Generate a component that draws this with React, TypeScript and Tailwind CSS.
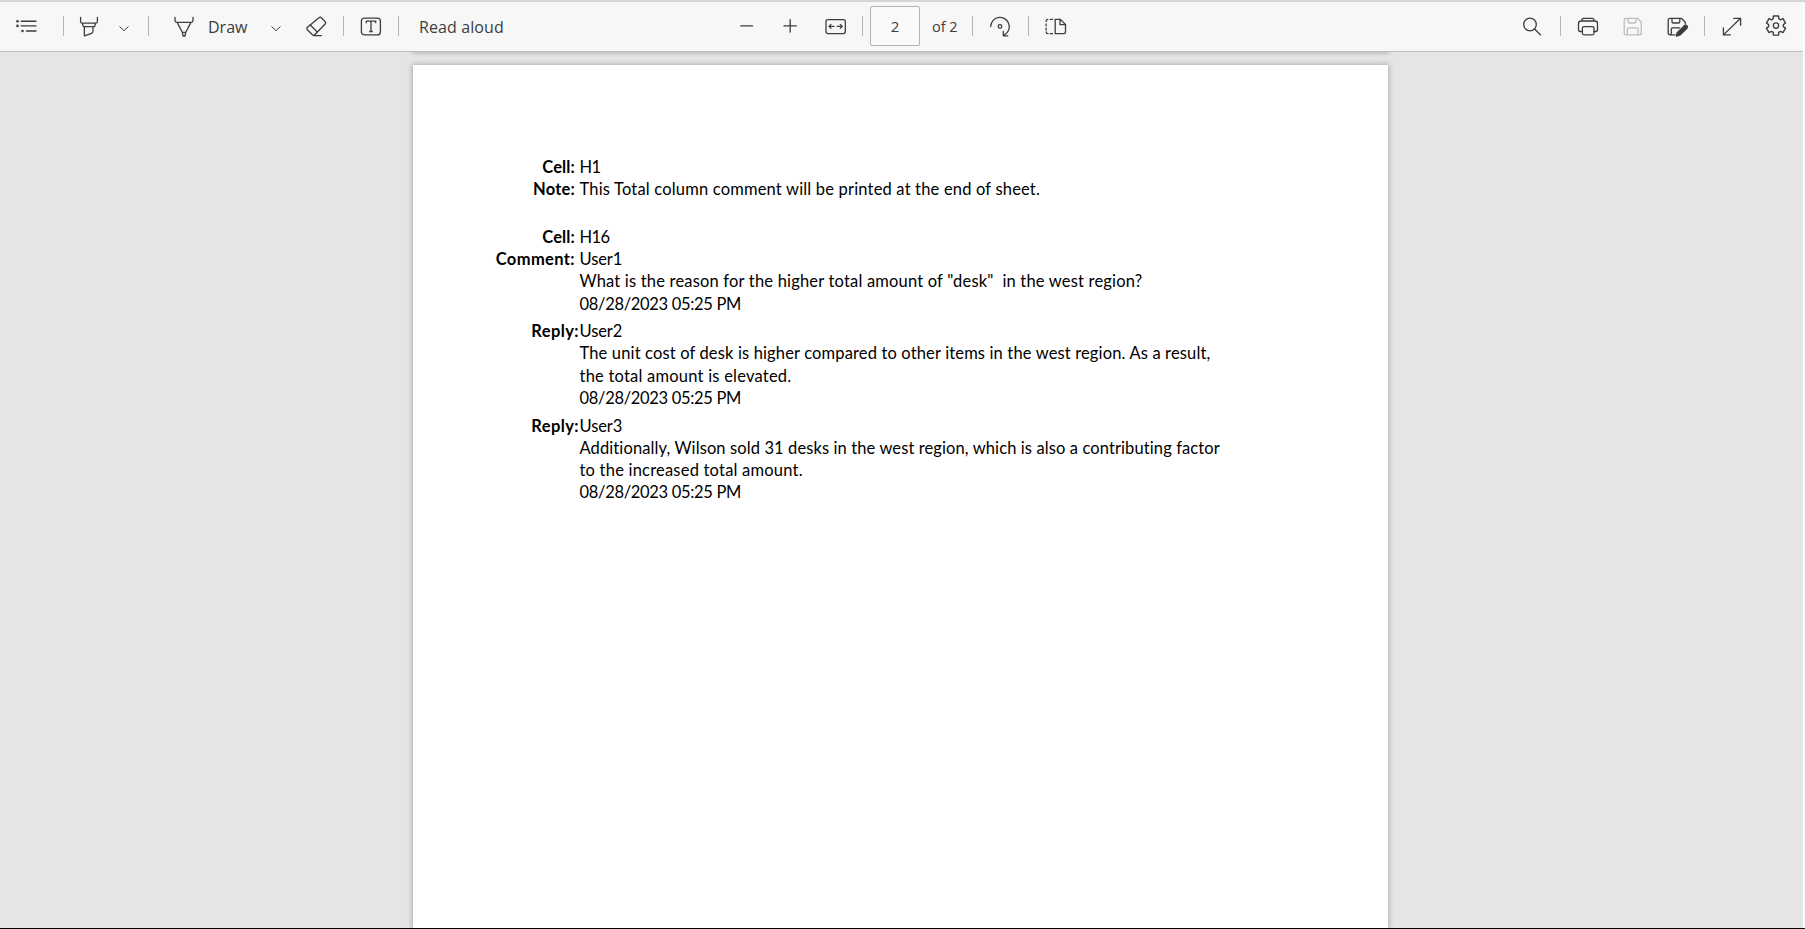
import React from 'react';

type IconProps = { className: string; width: number; children: React.ReactNode };

function Icon({ className, width, children }: IconProps) {
  return (
    <svg
      className={`shrink-0 ${className}`}
      width={width}
      height={24}
      viewBox={`0 0 ${width} 24`}
      fill="none"
      stroke="currentColor"
      strokeWidth={1.3}
      strokeLinecap="round"
      strokeLinejoin="round"
    >
      {children}
    </svg>
  );
}

function Divider({ className }: { className: string }) {
  return <div className={`h-5 w-px shrink-0 bg-[#b5b5b5] ${className}`} />;
}

function Chevron({ className }: { className: string }) {
  return (
    <Icon className={className} width={10}>
      <path d="M0.800 12.800l4.200 3.900 4.200-3.900" strokeWidth={1} />
    </Icon>
  );
}

const gearPath = (() => {
  const points: string[] = [];
  for (let tooth = 0; tooth < 6; tooth++) {
    const mid = tooth * 60 - 90;
    const corners: [number, number][] = [
      [-22, 7.4],
      [-15, 9.9],
      [15, 9.9],
      [22, 7.4],
    ];
    corners.forEach(([offset, radius]) => {
      const a = ((mid + offset) * Math.PI) / 180;
      points.push(`${(11 + radius * Math.cos(a)).toFixed(2)} ${(11.6 + radius * Math.sin(a)).toFixed(2)}`);
    });
  }
  return `M${points.join('L')}Z`;
})();

function Toolbar() {
  return (
    <header className="relative z-10 flex h-[52px] w-[1803px] items-center border-b border-[#bdbdbd] bg-[#f7f7f7] pt-px font-['Open_Sans','Noto_Sans',sans-serif] text-base text-[#3d3d3d]">
      <div className="flex items-center pl-4">
        <Icon className="" width={22}>
          <path d="M5.2 7.2H20M5.2 11.9H20M10.5 17H20" strokeWidth={1.4} />
          <g fill="currentColor" stroke="none">
            <circle cx="1.5" cy="7.2" r="1.3" />
            <circle cx="1.5" cy="11.9" r="1.3" />
            <circle cx="6.5" cy="17" r="1.3" />
          </g>
        </Icon>
        <Divider className="ml-[25px]" />
        <Icon className="ml-[15px]" width={20}>
          <path d="M1.6 3.3v4.4q0 1.5 1.5 1.5h13.8q1.5 0 1.5-1.5V3.3M3.3 9.3l1.1 3.3h11.2l1.1-3.3M5.4 12.8v9.1l6.6-2.3q2-.7 2-2.5v-4.3" />
        </Icon>
        <Chevron className="ml-5" />
        <Divider className="ml-[19px]" />
        <Icon className="ml-[25px]" width={20}>
          <path d="M1 3.3v3.3q0 1.7 1.7 1.7h14.6q1.7 0 1.7-1.7V3.3M3.2 8.4l5.2 10.1L9 22h2l.7-3.5 5.2-10.1M8.4 18.4h3.3" />
        </Icon>
        <span className="ml-[13px] w-[41px] pl-px pt-0.5">Draw</span>
        <Chevron className="ml-[23px]" />
        <Icon className="ml-6" width={22}>
          <path d="M14 3.8q1.2-1.1 2.4 0l3.7 3.8q1.1 1.2 0 2.4L9.8 20.7q-1.2 1.1-2.4 0l-5-5q-1.1-1.2 0-2.4zM5 10.8l7.3 7.2M8.5 21.6h7.8" />
        </Icon>
        <Divider className="ml-4" />
        <Icon className="ml-4" width={22}>
          <rect x="1.4" y="4.1" width="19" height="16.8" rx="3" />
          <path d="M6.3 9.2V7.2h9.4v2M11 7.2v10.2M9.2 17.5h3.6" strokeLinecap="butt" />
        </Icon>
        <Divider className="ml-4" />
        <span className="ml-[19px] w-[87px] whitespace-nowrap pl-px pt-0.5 tracking-[0.100px]">Read aloud</span>
      </div>

      <div className="ml-[234px] flex items-center">
        <Icon className="" width={16}>
          <path d="M1.7 11.9h11.8" />
        </Icon>
        <Icon className="ml-[27px]" width={16}>
          <path d="M2 11.9h12.4M8.2 5.7v12.4" />
        </Icon>
        <Icon className="ml-[27px]" width={22}>
          <rect x="1" y="5.6" width="19.3" height="14" rx="2" />
          <path d="M4 12.4h5M6 10.4l-2 2 2 2M17.3 12.4h-5M15.3 10.4l2 2-2 2" />
        </Icon>
        <Divider className="ml-[15px]" />
        <div className="ml-[7px] flex h-10 w-[50px] items-center justify-center rounded-[2px] border border-[#b3b3b3] bg-[#fafafa] pt-px text-[15px]">
          2
        </div>
        <span className="ml-3 w-7 whitespace-nowrap pt-0.5 text-[14.500px]">of 2</span>
        <Divider className="ml-3" />
        <Icon className="ml-4" width={22}>
          <path d="M1.7 12.5A9.3 9.3 0 1 1 14.3 21.4M14.3 17.3v4.5h4.5" />
          <circle cx="11" cy="12.4" r="1.8" />
        </Icon>
        <Divider className="ml-[17px]" />
        <Icon className="ml-4" width={22}>
          <path d="M10.2 5.4h5.2l5.1 5.1v7.3q0 1.9-1.9 1.9h-8.4zM15 5.6v5.1h5.2" />
          <path d="M7.5 5.4H5.3M2.8 5.4q-1.7.2-1.7 2M1.1 10v1.8M1.1 14.2V16M1.1 18q.2 1.7 1.9 1.7M5.3 19.7h2.2" />
        </Icon>
      </div>

      <div className="ml-auto flex items-center pr-4">
        <Icon className="" width={20}>
          <circle cx="8" cy="10.5" r="6.3" />
          <path d="M12.6 15l5.8 5.8" />
        </Icon>
        <Divider className="ml-[18px]" />
        <Icon className="ml-4" width={22}>
          <path d="M5 7v-.9q0-1.8 1.8-1.8h8.4Q17 4.3 17 6.1V7M5 17.5H3.4q-1.9 0-1.9-1.9V9.6Q1.5 7 4.1 7h13.8q2.6 0 2.6 2.6v6q0 1.9-1.9 1.9H17" />
          <rect x="5.4" y="12.6" width="11.6" height="8.2" rx="1.5" />
        </Icon>
        <Icon className="ml-6 text-[#bdbdbd]" width={20}>
          <path d="M1.2 6.3q0-2 2-2h11.2l3.9 3.9v10.6q0 2-2 2H3.2q-2 0-2-2zM5 4.5v3.2q0 1.3 1.3 1.3h5.2q1.3 0 1.3-1.3V4.5M4.3 20.6v-5.4q0-1.3 1.3-1.3h8.3q1.3 0 1.3 1.3v5.4" />
        </Icon>
        <Icon className="ml-6" width={22}>
          <path d="M18.3 10V8.2l-3.9-3.9H3.2q-2 0-2 2v12.500q0 2 2 2H8M5 4.500v3.200q0 1.300 1.300 1.300h5.200q1.300 0 1.300-1.300V4.500M4.300 20.600v-5.400q0-1.300 1.300-1.300h7" />
          <path d="M9.500 22l.8-3.300 7.200-7q1.200-.9 2.300.2 1 1.100.1 2.200l-7.200 7z" fill="currentColor" strokeWidth={1.600} />
        </Icon>
        <Divider className="ml-[15px]" />
        <Icon className="ml-[17px]" width={20}>
          <path d="M1.4 20.9L18.6 4.3M11.7 4.3h6.9v6.9M1.4 14v6.9h6.9" />
        </Icon>
        <Icon className="ml-[23px]" width={22}>
          <path d={gearPath} strokeWidth={1.4} />
          <circle cx="11" cy="11.6" r="2.7" />
        </Icon>
      </div>
    </header>
  );
}

type RowProps = { label?: string; labelClass?: string; text: string; textClass: string };

function Row({ label = '', labelClass = '', text, textClass }: RowProps) {
  return (
    <div className="flex whitespace-pre">
      <span className={`w-[162px] shrink-0 text-right font-bold ${labelClass}`}>{label}</span>
      <span className={`pl-[4.500px] ${textClass}`}>{text}</span>
    </div>
  );
}

const stamp = '08/28/2023 05:25 PM';

function Page() {
  return (
    <article className="ml-[413px] mt-[13px] h-[863px] w-[975px] shrink-0 bg-white pt-[90.500px] font-['Lato','Liberation_Sans',sans-serif] text-[16.500px] leading-[22.200px] text-black shadow-[0_0_5px_1px_rgba(0,0,0,0.240)]">
      <section>
        <Row label="Cell:" labelClass="tracking-[0.150px]" text="H1" textClass="tracking-[-0.700px]" />
        <Row
          label="Note:"
          labelClass="tracking-[0.200px]"
          text="This Total column comment will be printed at the end of sheet."
          textClass="tracking-[0.180px]"
        />
      </section>
      <section className="mt-[26px]">
        <Row label="Cell:" labelClass="tracking-[0.150px]" text="H16" textClass="tracking-[-0.600px]" />
        <Row label="Comment:" labelClass="tracking-[0.380px]" text="User1" textClass="tracking-[-0.100px]" />
        <Row
          text={'What is the reason for the higher total amount of "desk"  in the west region?'}
          textClass="tracking-[0.185px]"
        />
        <Row text={stamp} textClass="tracking-[-0.320px]" />
      </section>
      <section className="mt-[5.500px]">
        <Row label="Reply:" labelClass="relative left-1 tracking-[0.400px]" text="User2" textClass="tracking-[-0.100px]" />
        <Row
          text="The unit cost of desk is higher compared to other items in the west region. As a result,"
          textClass="tracking-[0.145px]"
        />
        <Row text="the total amount is elevated." textClass="tracking-[0.220px]" />
        <Row text={stamp} textClass="tracking-[-0.320px]" />
      </section>
      <section className="mt-[5.500px]">
        <Row label="Reply:" labelClass="relative left-1 tracking-[0.400px]" text="User3" textClass="tracking-[-0.100px]" />
        <Row
          text="Additionally, Wilson sold 31 desks in the west region, which is also a contributing factor"
          textClass="tracking-[0.105px]"
        />
        <Row text="to the increased total amount." textClass="tracking-[0.210px]" />
        <Row text={stamp} textClass="tracking-[-0.320px]" />
      </section>
    </article>
  );
}

export default function App() {
  return (
    <div className="flex h-[929px] w-[1805px] flex-col overflow-hidden border-b border-black bg-[#e5e5e5]">
      <div className="bg-[#fcfcfc]">
        <div className="relative z-20 -mb-[2px] h-[2px] bg-[#d6d6d6]" />
        <Toolbar />
      </div>
      <div className="flex min-h-0 flex-1 flex-col overflow-hidden border-r-2 border-[#fafafa]">
        <div className="-mt-[3px] ml-[413px] h-[3px] w-[975px] shrink-0 shadow-[0_0_5px_1px_rgba(0,0,0,0.240)]" />
        <Page />
      </div>
    </div>
  );
}
